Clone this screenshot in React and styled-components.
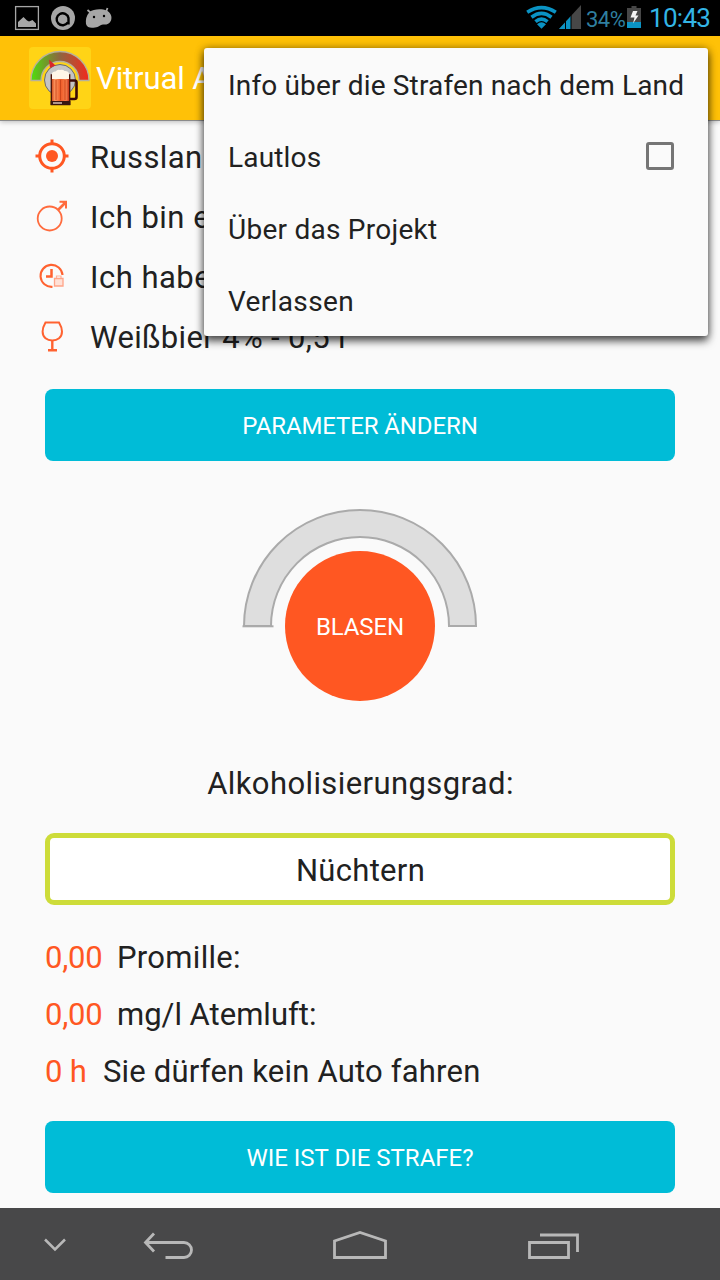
import React from 'react'
import styled, { createGlobalStyle } from 'styled-components'

const GlobalStyle = createGlobalStyle`
  * {
    box-sizing: border-box;
  }

  body {
    margin: 0;
    background: #fafafa;
    font-family: Roboto, sans-serif;
    color: #212121;
  }

  svg {
    display: block;
    flex: none;
  }
`

const Screen = styled.div`
  position: relative;
  display: flex;
  flex-direction: column;
  width: 720px;
  height: 1280px;
  overflow: hidden;
  background: #fafafa;
`

const StatusBar = styled.div`
  display: flex;
  justify-content: space-between;
  flex: none;
  height: 36px;
  background: #000000;
`

const Signals = styled.div`
  display: flex;
  align-items: center;
  padding-right: 8px;
`

const Battery = styled.span`
  width: 41px;
  margin-left: 4px;
  padding-top: 3px;
  font-size: 22px;
  line-height: 33px;
  letter-spacing: -0.5px;
  white-space: nowrap;
  color: #2f7f9f;
`

const Clock = styled.span`
  width: 63px;
  margin-left: 8px;
  font-size: 26px;
  line-height: 36px;
  letter-spacing: -0.7px;
  white-space: nowrap;
  color: #33b5e5;
`

const AppBar = styled.header`
  display: flex;
  align-items: center;
  flex: none;
  height: 85px;
  padding: 0 0 1px 29px;
  background: #ffc107;
  border-bottom: 1px solid #8b8b8b;
  box-shadow: 0 1px 5px rgba(0, 0, 0, 0.25);
`

const AppTitle = styled.h1`
  margin: 1px 0 0 5px;
  font-size: 31px;
  font-weight: 400;
  letter-spacing: -0.1px;
  white-space: nowrap;
  color: #ffffff;
`

const Content = styled.main`
  display: flex;
  flex-direction: column;
  flex: 1;
  padding: 6px 45px 0;
`

const Params = styled.ul`
  margin: 0 0 22px -15px;
  padding: 0;
  list-style: none;
`

const Param = styled.li`
  display: flex;
  align-items: center;
  height: 60px;
  font-size: 31px;
  line-height: 61px;
  letter-spacing: ${props => props.spacing};
  white-space: nowrap;

  svg {
    margin-right: 16px;
  }

  span {
    height: 60px;
  }
`

const Button = styled.button`
  flex: none;
  width: 100%;
  height: 72px;
  padding: 2px 0 0;
  border: none;
  border-radius: 8px;
  background: #00bcd7;
  color: #ffffff;
  font-family: Roboto, sans-serif;
  font-size: 24px;
  letter-spacing: ${props => props.spacing || '0'};
  text-transform: uppercase;
`

const Gauge = styled.div`
  display: grid;
  justify-content: center;
  margin-top: 39px;
  height: 210px;

  > * {
    grid-area: 1 / 1;
  }
`

const BlowButton = styled.button`
  justify-self: center;
  align-self: start;
  width: 150px;
  height: 150px;
  margin-top: 51px;
  padding: 2px 0 0;
  border: none;
  border-radius: 50%;
  background: #ff5722;
  color: #ffffff;
  font-family: Roboto, sans-serif;
  font-size: 24px;
  letter-spacing: -0.1px;
`

const Caption = styled.p`
  margin: 54px 0 0;
  padding-left: 1px;
  font-size: 31px;
  line-height: 40px;
  letter-spacing: 0.4px;
  text-align: center;
`

const Result = styled.div`
  display: flex;
  align-items: center;
  justify-content: center;
  flex: none;
  height: 72px;
  margin-top: 29px;
  padding: 2px 0 0 1px;
  border: 5px solid #cddc39;
  border-radius: 9px;
  background: #ffffff;
  font-size: 31px;
  letter-spacing: 0.3px;
`

const Stats = styled.div`
  margin: 24px 0 21px;
`

const Stat = styled.div`
  display: flex;
  align-items: center;
  height: 57px;
  padding-bottom: 1px;
  font-size: 31px;
  letter-spacing: ${props => props.spacing};
  white-space: nowrap;
`

const Value = styled.span`
  width: ${props => props.width};
  letter-spacing: -0.2px;
  color: #ff5722;
`

const NavBar = styled.nav`
  display: flex;
  flex: none;
  height: 72px;
  background: #484849;
`

const Menu = styled.div`
  position: absolute;
  top: 48px;
  left: 204px;
  width: 504px;
  height: 288px;
  border-radius: 3px;
  background: #fafafa;
  box-shadow: 0 5px 9px rgba(0, 0, 0, 0.65), 0 0 8px rgba(0, 0, 0, 0.35);
`

const MenuItem = styled.div`
  display: flex;
  align-items: center;
  justify-content: space-between;
  height: 72px;
  padding: 3px 34px 0 24px;
  font-size: 28px;
  letter-spacing: ${props => props.spacing || '0.16px'};
  white-space: nowrap;
`

const Checkbox = styled.span`
  width: 28px;
  height: 28px;
  margin-bottom: 3px;
  border: 3px solid #757575;
  border-radius: 3px;
`

const Notifications = () => (
  <svg width="120" height="36" viewBox="0 0 120 36" fill="#a6a6a6">
    <rect x="15.6" y="6.6" width="22.8" height="22.8" fill="none" stroke="#a6a6a6" strokeWidth="1.3" />
    <path d="M18 27v-5l5.500-5 3.500 3.500 2 1 3.500-1.500 3.500 3.500v3.500z" />
    <circle cx="63" cy="18" r="12" />
    <path d="M67.800 22.300A6 6 0 1 1 68.500 18v6.500" fill="none" stroke="#000" strokeWidth="2.400" />
    <circle cx="63" cy="18.300" r="2.400" />
    <path d="M89.500 12c4-3.500 13-3.500 17-1.500 4 2 6 6 4.500 10-1.500 3.500-5 4.500-8 4-3 0-4 3-8 3-4 .5-8 .5-9-3.500-.5-4 0-8 3.500-12z" />
    <path d="M91 13l-3.500-3M106 12l1.500-4" stroke="#a6a6a6" strokeWidth="1.8" />
    <circle cx="94" cy="17" r="1.200" fill="#000" />
    <circle cx="104" cy="16" r="1.200" fill="#000" />
  </svg>
)

const NetworkIcons = () => (
  <svg width="56" height="36" viewBox="0 0 56 36">
    <g fill="none" stroke="#0a93c4" strokeWidth="3.600">
      <path d="M1.200 12.300Q15.500 3 29.800 12.300" />
      <path d="M5.500 17.200Q15.500 9.500 25.500 17.200" />
      <path d="M9.500 21.700Q15.500 16.500 21.500 21.700" />
    </g>
    <path d="M11 24.200Q15.500 20.500 20 24.200L15.500 28.700z" fill="#0a93c4" />
    <path d="M55 5v24H33z" fill="#474747" />
    <path d="M33 29l12-13v13z" fill="#0a93c4" />
    <path d="M39.500 21v8M45 15v14" stroke="#000" strokeWidth="1" />
  </svg>
)

const BatteryIcon = () => (
  <svg width="14" height="36" viewBox="0 0 14 36">
    <path d="M4.500 6h5v2H14v14H0V8h4.500z" fill="#474747" />
    <path d="M0 22h14v6H0z" fill="#0a93c4" />
    <path d="M6 11h4.500l-2 4.500h3L6 23.500l1.500-6H3.500z" fill="#f4f4f4" />
  </svg>
)

const Logo = () => (
  <svg width="62" height="62" viewBox="0 0 62 62">
    <defs>
      <linearGradient id="scale">
        <stop offset="0" stopColor="#4fe00c" />
        <stop offset="0.25" stopColor="#6f9c28" />
        <stop offset="0.5" stopColor="#8f6540" />
        <stop offset="0.75" stopColor="#c04a30" />
        <stop offset="1" stopColor="#f4281c" />
      </linearGradient>
      <linearGradient id="beer">
        <stop offset="0" stopColor="#c93f14" />
        <stop offset="0.2" stopColor="#ff9a63" />
        <stop offset="0.5" stopColor="#ee5a26" />
        <stop offset="0.8" stopColor="#f8804c" />
        <stop offset="1" stopColor="#b9240d" />
      </linearGradient>
    </defs>
    <rect width="62" height="62" rx="4" fill="#ffd416" />
    <path d="M2 33.500a29 29 0 0 1 58 0H50a19 19 0 0 0-38 0z" fill="url(#scale)" stroke="#b6b19b" strokeWidth="1.300" />
    <circle cx="31" cy="33" r="15.500" fill="#c4c4c4" stroke="#6c6c66" strokeWidth="1" />
    <path d="M20 12.500l6.500 6-5.500 2.500z" fill="#d8262a" />
    <path d="M41 33.500h4.500q2 0 2 2v14.500q0 2-2 2H41" fill="none" stroke="#3b0906" strokeWidth="2.600" />
    <path d="M22.300 28h18.400v29.500H22.300z" fill="url(#beer)" stroke="#4a1208" strokeWidth="1.300" />
    <path d="M27 33v20M31.500 33v20M36 33v20" stroke="#c8441a" strokeWidth="0.900" />
    <path d="M21.600 54h19.800v4H21.600z" fill="#3a1712" />
    <path d="M24 56h9" stroke="#d8c0b4" strokeWidth="1.500" />
    <path d="M23 26q1.500-2 3.500-1.500 2-2.500 4.500-1.500 3-1 4.500 1 3-.5 4.500 2v6H23z" fill="#fff6e8" />
  </svg>
)

const TargetIcon = () => (
  <svg width="44" height="60" viewBox="0 0 44 60" fill="none" stroke="#ff5722">
    <circle cx="22" cy="29" r="12.300" strokeWidth="3" />
    <path d="M22 12.500v5M22 40.500v5M5.500 29h5M33.500 29h5" strokeWidth="3" />
    <circle cx="22" cy="29" r="6" fill="#ff5722" stroke="none" />
  </svg>
)

const MaleIcon = () => (
  <svg width="44" height="60" viewBox="0 0 44 60" fill="none" stroke="#ff6b3d" strokeWidth="1.800">
    <circle cx="19.700" cy="31.500" r="12" />
    <path d="M28 23l7-7" strokeWidth="2.600" />
    <path d="M29.500 14.700h6.500v6.800" strokeWidth="2" />
    <path d="M31 14h6v6z" fill="#ff6b3d" stroke="none" />
  </svg>
)

const ClockIcon = () => (
  <svg width="44" height="60" viewBox="0 0 44 60" fill="none" stroke="#ff6230">
    <path d="M22.500 39.800A11 11 0 1 1 32.500 28" strokeWidth="2.100" />
    <path d="M21.500 22v7.500h-5.500" strokeWidth="2.500" />
    <path d="M24.500 31.500h8.500v7.500h-8.500z" fill="#ffe1d7" stroke="#ffa488" strokeWidth="1.300" />
    <path d="M26.500 31v-2h4.500v2" stroke="#ffb197" strokeWidth="1.200" />
  </svg>
)

const GlassIcon = () => (
  <svg width="44" height="60" viewBox="0 0 44 60" fill="none" stroke="#ff6230" strokeWidth="2">
    <path d="M15.500 15.500h13.500q3 5 3 9c0 6-4.500 9-9.700 9s-9.700-3-9.700-9q0-4 2.900-9z" />
    <path d="M22.300 33.500v10M18 43.300h9" strokeWidth="2.400" />
  </svg>
)

const Arc = () => (
  <svg width="240" height="210" viewBox="0 0 240 210">
    <path d="M4 126a116 116 0 0 1 232 0H209a89 89 0 0 0-178 0z" fill="#dedede" stroke="#aaaaaa" strokeWidth="2" />
    <path d="M2.500 126.300h31" stroke="#aaaaaa" strokeWidth="2" />
  </svg>
)

const NavIcons = () => (
  <svg width="720" height="72" viewBox="0 0 720 72" fill="none" stroke="#b8b8b8" strokeWidth="3">
    <path d="M45 31.500l10 10 10-10" strokeWidth="2.500" />
    <path d="M154 25.500l-8.500 9 8.500 9M146 34.500h38a7.500 7.500 0 0 1 0 15h-18.500" strokeWidth="2.800" />
    <path d="M334.500 49.500v-16.500L360 24.500l25.500 8.500v16.500z" strokeWidth="2.800" />
    <path d="M529.500 34.500h39v15h-39zM540 27h37.500v17" strokeWidth="2.800" />
  </svg>
)

const params = [
  { text: 'Russlan', icon: TargetIcon, spacing: '0.4px' },
  { text: 'Ich bin e', icon: MaleIcon, spacing: '0.5px' },
  { text: 'Ich habe', icon: ClockIcon, spacing: '0.5px' },
  { text: 'Weißbier 4% - 0,5 l', icon: GlassIcon, spacing: '0.35px' },
]

const stats = [
  { value: '0,00', label: 'Promille:', width: '72px', spacing: '0.3px' },
  { value: '0,00', label: 'mg/l Atemluft:', width: '72px', spacing: '0' },
  { value: '0 h', label: 'Sie dürfen kein Auto fahren', width: '58px', spacing: '0.2px' },
]

const App = () => {
  return (
    <Screen>
      <GlobalStyle />
      <StatusBar>
        <Notifications />
        <Signals>
          <NetworkIcons />
          <Battery>34%</Battery>
          <BatteryIcon />
          <Clock>10:43</Clock>
        </Signals>
      </StatusBar>
      <AppBar>
        <Logo />
        <AppTitle>Vitrual A</AppTitle>
      </AppBar>
      <Content>
        <Params>
          {params.map(({ text, icon: Icon, spacing }) => (
            <Param key={text} spacing={spacing}>
              <Icon />
              <span>{text}</span>
            </Param>
          ))}
        </Params>
        <Button spacing="-0.12px">Parameter ändern</Button>
        <Gauge>
          <Arc />
          <BlowButton>BLASEN</BlowButton>
        </Gauge>
        <Caption>Alkoholisierungsgrad:</Caption>
        <Result>Nüchtern</Result>
        <Stats>
          {stats.map(s => (
            <Stat key={s.label} spacing={s.spacing}>
              <Value width={s.width}>{s.value}</Value>
              {s.label}
            </Stat>
          ))}
        </Stats>
        <Button>Wie ist die Strafe?</Button>
      </Content>
      <NavBar>
        <NavIcons />
      </NavBar>
      <Menu>
        <MenuItem>Info über die Strafen nach dem Land</MenuItem>
        <MenuItem>
          Lautlos
          <Checkbox />
        </MenuItem>
        <MenuItem spacing="0.25px">Über das Projekt</MenuItem>
        <MenuItem spacing="0.35px">Verlassen</MenuItem>
      </Menu>
    </Screen>
  )
}

export default App
